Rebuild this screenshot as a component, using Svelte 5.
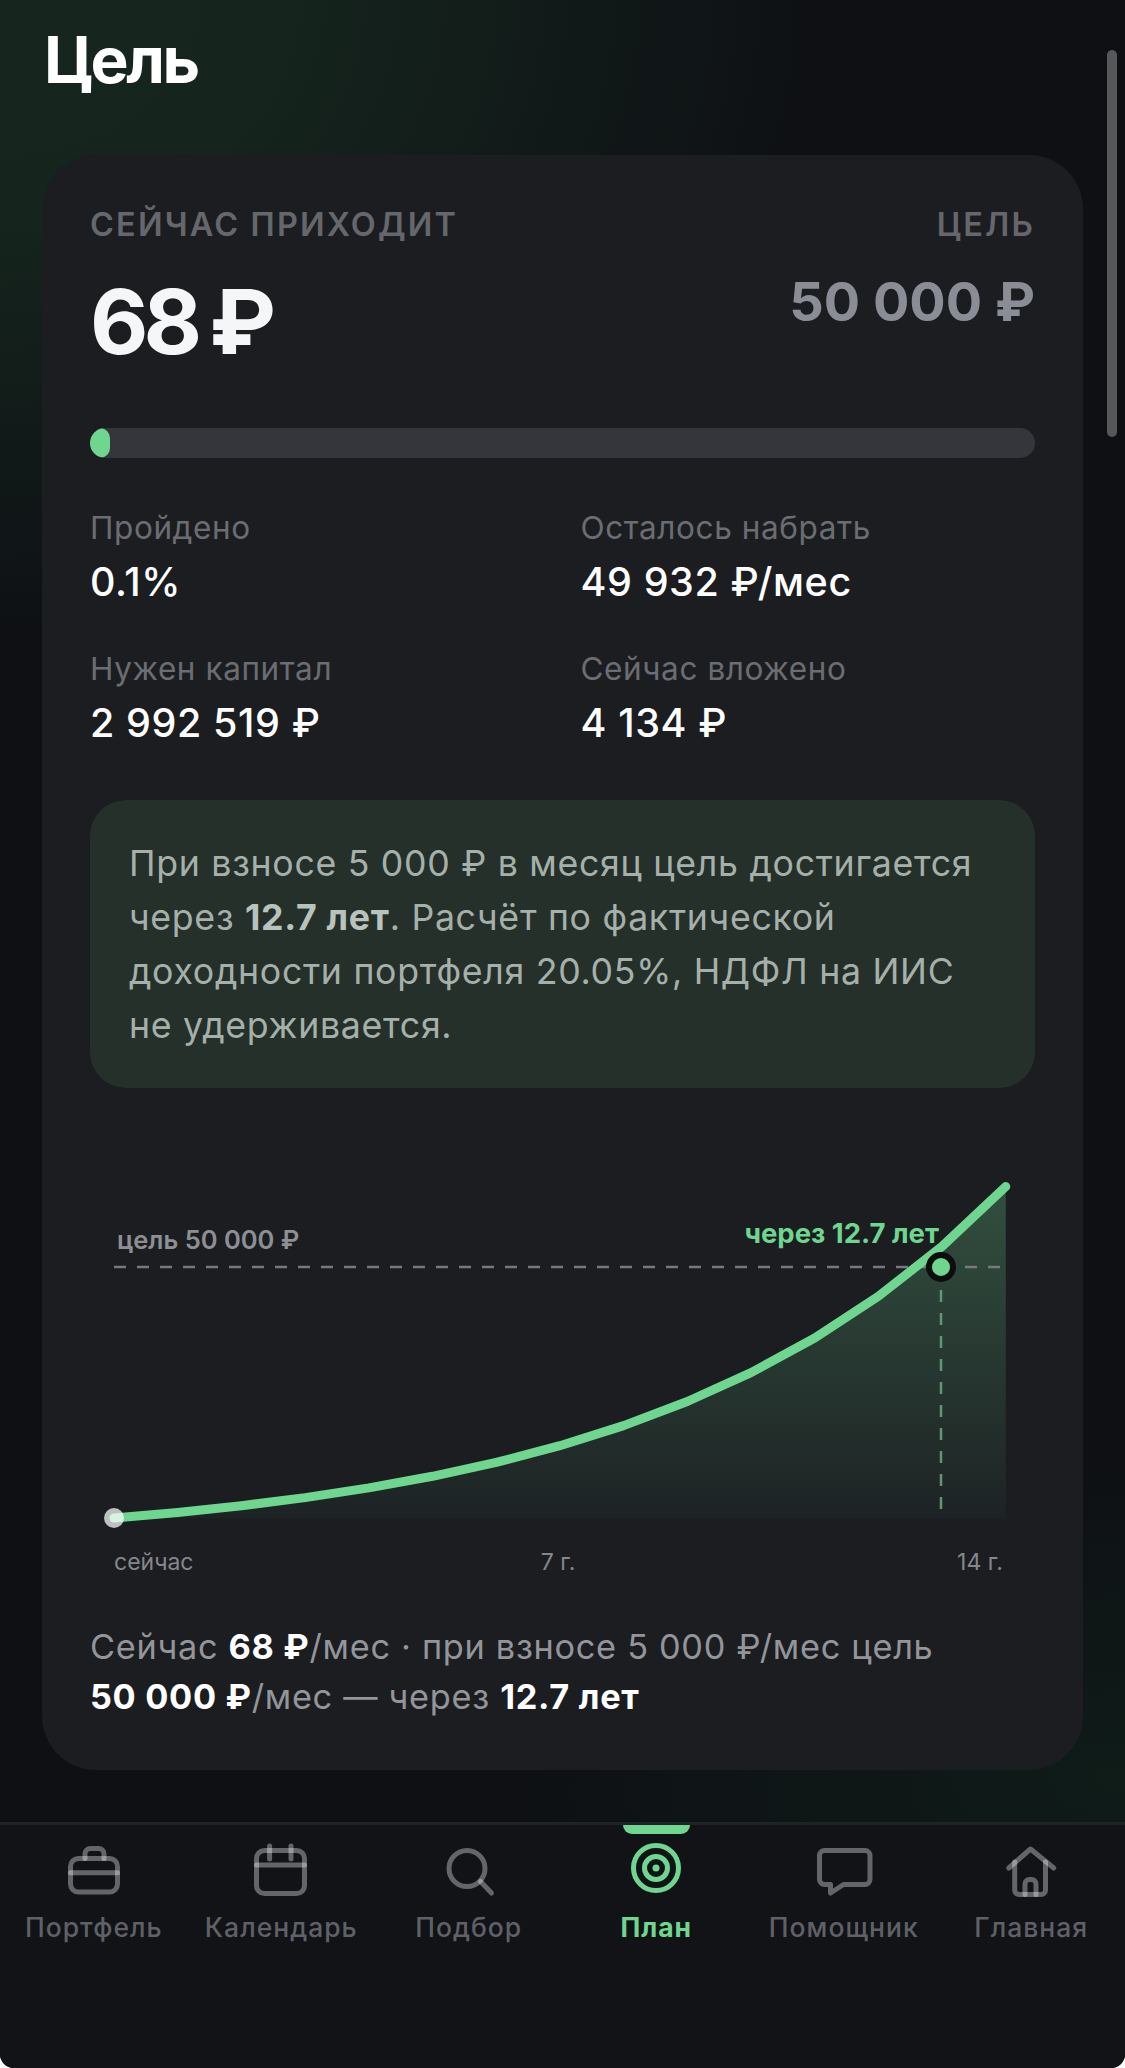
<script>
    const stats = [
        { label: 'Пройдено', value: '0.1%' },
        { label: 'Осталось набрать', value: '49 932 ₽/мес' },
        { label: 'Нужен капитал', value: '2 992 519 ₽' },
        { label: 'Сейчас вложено', value: '4 134 ₽' }
    ];

    const tabs = ['Портфель', 'Календарь', 'Подбор', 'План', 'Помощник', 'Главная'];

    // chart coordinates are relative to the svg, which starts at the card padding
    const x0 = 24;
    const stepX = 63.7;
    const baseY = 348;
    function yAt(t) {
        return baseY - 28 * (Math.pow(1.2, t) - 1);
    }
    const points = Array.from({ length: 15 }, (_, t) => `${(x0 + t * stepX).toFixed(1)},${yAt(t).toFixed(1)}`);
    const line = points.join(' ');
    const area = `${x0},${baseY} ${line} ${x0 + 14 * stepX},${baseY}`;
    const hitX = 851;
    const goalY = 97;
</script>

<div class="page">
    <div class="scrollbar"></div>

    <h1 class="title">Цель</h1>

    <section class="card">
        <div class="head">
            <div>
                <div class="caption">СЕЙЧАС ПРИХОДИТ</div>
                <div class="now">68 ₽</div>
            </div>
            <div class="head-right">
                <div class="caption">ЦЕЛЬ</div>
                <div class="goal">50 000 ₽</div>
            </div>
        </div>

        <div class="progress"><div class="progress-fill"></div></div>

        <div class="stats">
            {#each stats as s}
                <div>
                    <div class="stat-label">{s.label}</div>
                    <div class="stat-value">{s.value}</div>
                </div>
            {/each}
        </div>

        <div class="note">
            При взносе 5 000 ₽ в месяц цель достигается через <b>12.7 лет</b>. Расчёт по фактической доходности портфеля 20.05%, НДФЛ на ИИС не удерживается.
        </div>

        <svg class="chart" width="945" height="420" viewBox="0 0 945 420">
            <defs>
                <linearGradient id="areaFill" x1="0" y1="0" x2="0" y2="1">
                    <stop offset="0" stop-color="#6fd68f" stop-opacity="0.27" />
                    <stop offset="1" stop-color="#6fd68f" stop-opacity="0.03" />
                </linearGradient>
            </defs>
            <polygon points={area} fill="url(#areaFill)" />
            <line x1={x0} y1={goalY} x2="915" y2={goalY} stroke="#77797c" stroke-width="2.5" stroke-dasharray="12 11" />
            <line x1={hitX} y1={goalY} x2={hitX} y2={baseY} stroke="#5f9674" stroke-width="2.5" stroke-dasharray="12 11" />
            <polyline points={line} fill="none" stroke="#6fd68f" stroke-width="9" stroke-linecap="round" stroke-linejoin="round" />
            <circle cx={x0} cy={baseY} r="10" fill="#fff" fill-opacity="0.72" />
            <circle cx={hitX} cy={goalY} r="12" fill="#6fd68f" stroke="#0b0d0f" stroke-width="6" />
            <text class="t-goal" x="27" y="79">цель 50 000 ₽</text>
            <text class="t-hit" x="849" y="73" text-anchor="end">через 12.7 лет</text>
            <text class="t-axis" x={x0} y="400">сейчас</text>
            <text class="t-axis" x="468" y="400" text-anchor="middle">7 г.</text>
            <text class="t-axis" x="913" y="400" text-anchor="end">14 г.</text>
        </svg>

        <p class="summary">
            Сейчас <b>68&nbsp;₽</b>/мес · при взносе 5 000 ₽/мес цель <b>50&nbsp;000&nbsp;₽</b>/мес — через <b>12.7 лет</b>
        </p>
    </section>

    <nav class="nav">
        {#each tabs as tab, i}
            <div class="tab" class:active={tab === 'План'}>
                {#if tab === 'План'}<span class="marker"></span>{/if}
                <svg class="icon" width="60" height="60" viewBox="0 0 60 60" fill="none" stroke-linecap="round" stroke-linejoin="round">
                    {#if i === 0}
                        <rect x="6.5" y="18.5" width="47" height="33.5" rx="8" />
                        <path d="M6.5 32.7H53.5" />
                        <path d="M21 18.5V14a5.5 5.5 0 0 1 5.5-5.5h8a5.5 5.5 0 0 1 5.5 5.5v4.5" />
                    {:else if i === 1}
                        <rect x="5.5" y="10.5" width="48" height="43" rx="8" />
                        <path d="M5.5 25H53.5" />
                        <path d="M18.6 6V19M40 6V19" />
                    {:else if i === 2}
                        <circle cx="28" cy="28.5" r="18" />
                        <path d="M41.5 41.5L52.5 53" />
                    {:else if i === 3}
                        <circle cx="30" cy="28" r="22.5" />
                        <circle cx="30" cy="28" r="11.5" />
                        <circle class="dot" cx="30" cy="28" r="3.5" />
                    {:else if i === 4}
                        <path d="M10.5 10.5h40.5a5 5 0 0 1 5 5v24a5 5 0 0 1-5 5H29.5L16.5 53V44.5h-6a5 5 0 0 1-5-5v-24a5 5 0 0 1 5-5z" />
                    {:else}
                        <path d="M7.8 28L29.5 9L52.7 28" />
                        <path d="M13.7 22V50a4.5 4.5 0 0 0 4.5 4.5H40a4.5 4.5 0 0 0 4.5-4.5V22" />
                        <path d="M24 54.5V44a4.5 4.5 0 0 1 4.5-4.5h2a4.5 4.5 0 0 1 4.5 4.5V54.5" />
                    {/if}
                </svg>
                <span class="tab-label">{tab}</span>
            </div>
        {/each}
    </nav>
</div>

<style>
    :global(body) {
        margin: 0;
        background: #fff;
    }

    .page {
        position: relative;
        display: flex;
        flex-direction: column;
        height: 2068px;
        overflow: hidden;
        border-radius: 0 0 14px 14px;
        font-family: Inter, "Noto Sans", sans-serif;
        background:
            radial-gradient(ellipse 820px 640px at 0 0, #16261e 0%, #15241d 35%, rgba(14, 16, 20, 0) 100%),
            radial-gradient(ellipse 620px 320px at 1125px 1780px, #0f1c18 0%, rgba(14, 16, 20, 0) 100%),
            #0e1014;
    }

    .scrollbar {
        position: absolute;
        top: 50px;
        right: 8px;
        width: 10px;
        height: 387px;
        border-radius: 5px;
        background: rgba(255, 255, 255, 0.3);
    }

    .title {
        margin: 0;
        padding: 24px 0 0 44px;
        height: 155px;
        box-sizing: border-box;
        font-size: 64px;
        line-height: 72px;
        font-weight: 700;
        letter-spacing: -2.5px;
        color: #fff;
    }

    .card {
        box-sizing: border-box;
        width: 1041px;
        height: 1615px;
        margin-left: 42px;
        padding: 50px 48px 48px;
        border-radius: 54px;
        background: #1b1d21;
    }

    .head {
        display: flex;
        justify-content: space-between;
        height: 223px;
    }

    .head-right {
        text-align: right;
    }

    .caption {
        font-size: 32.4px;
        line-height: 40px;
        font-weight: 600;
        letter-spacing: 2.2px;
        color: #65676c;
    }

    .now {
        margin-top: 23px;
        font-size: 90px;
        line-height: 108px;
        font-weight: 700;
        letter-spacing: -5px;
        word-spacing: -4px;
        color: #f5f6f8;
    }

    .goal {
        margin-top: 22px;
        font-size: 54px;
        line-height: 70px;
        font-weight: 700;
        color: #8b8d96;
    }

    .progress {
        height: 30px;
        border-radius: 15px;
        background: #35363b;
        overflow: hidden;
    }

    .progress-fill {
        width: 20px;
        height: 100%;
        border-radius: 15px;
        background: #6fd68f;
    }

    .stats {
        display: grid;
        grid-template-columns: 1fr 1fr;
        column-gap: 36px;
        row-gap: 44px;
        margin-top: 50px;
    }

    .stat-label {
        font-size: 31.5px;
        line-height: 40px;
        letter-spacing: 0.6px;
        color: #6b6d72;
    }

    .stat-value {
        margin-top: 11px;
        font-size: 39.5px;
        line-height: 46px;
        font-weight: 500;
        letter-spacing: 0.6px;
        color: #fff;
    }

    .note {
        margin-top: 54px;
        padding: 36px 39px;
        border-radius: 36px;
        background: #25302a;
        font-size: 35.7px;
        line-height: 54px;
        letter-spacing: 0.7px;
        color: #a6b0aa;
    }

    .note b {
        font-weight: 700;
        color: #b9c3bd;
    }

    .chart {
        display: block;
        margin-top: 82px;
    }

    .chart text {
        font-family: Inter, "Noto Sans", sans-serif;
    }

    .t-goal {
        font-size: 25.5px;
        font-weight: 600;
        fill: #8d8f94;
    }

    .t-hit {
        font-size: 27.5px;
        font-weight: 700;
        fill: #6fd68f;
    }

    .t-axis {
        font-size: 23px;
        fill: #85878c;
    }

    .summary {
        margin: 32px 0 0;
        font-size: 34.3px;
        line-height: 50px;
        letter-spacing: 0.7px;
        color: #93959a;
    }

    .summary b {
        font-weight: 700;
        color: #fff;
    }

    .nav {
        display: grid;
        grid-template-columns: repeat(6, 1fr);
        margin-top: 52px;
        flex: 1;
        padding-top: 15px;
        border-top: 3px solid #1f2226;
        background: #111317;
    }

    .tab {
        position: relative;
        display: flex;
        flex-direction: column;
        align-items: center;
    }

    .marker {
        position: absolute;
        top: -15px;
        left: 60px;
        width: 67px;
        height: 9px;
        border-radius: 0 0 9px 9px;
        background: #6fd68f;
    }

    .icon {
        stroke: rgba(255, 255, 255, 0.35);
        stroke-width: 5;
    }

    .tab-label {
        margin-top: 9px;
        font-size: 26.5px;
        line-height: 36px;
        font-weight: 500;
        letter-spacing: 1px;
        color: #5f6167;
    }

    .active .icon {
        stroke: #6fd68f;
    }

    .active .dot {
        fill: #6fd68f;
        stroke: none;
    }

    .active .tab-label {
        font-weight: 700;
        color: #6fd68f;
    }
</style>
